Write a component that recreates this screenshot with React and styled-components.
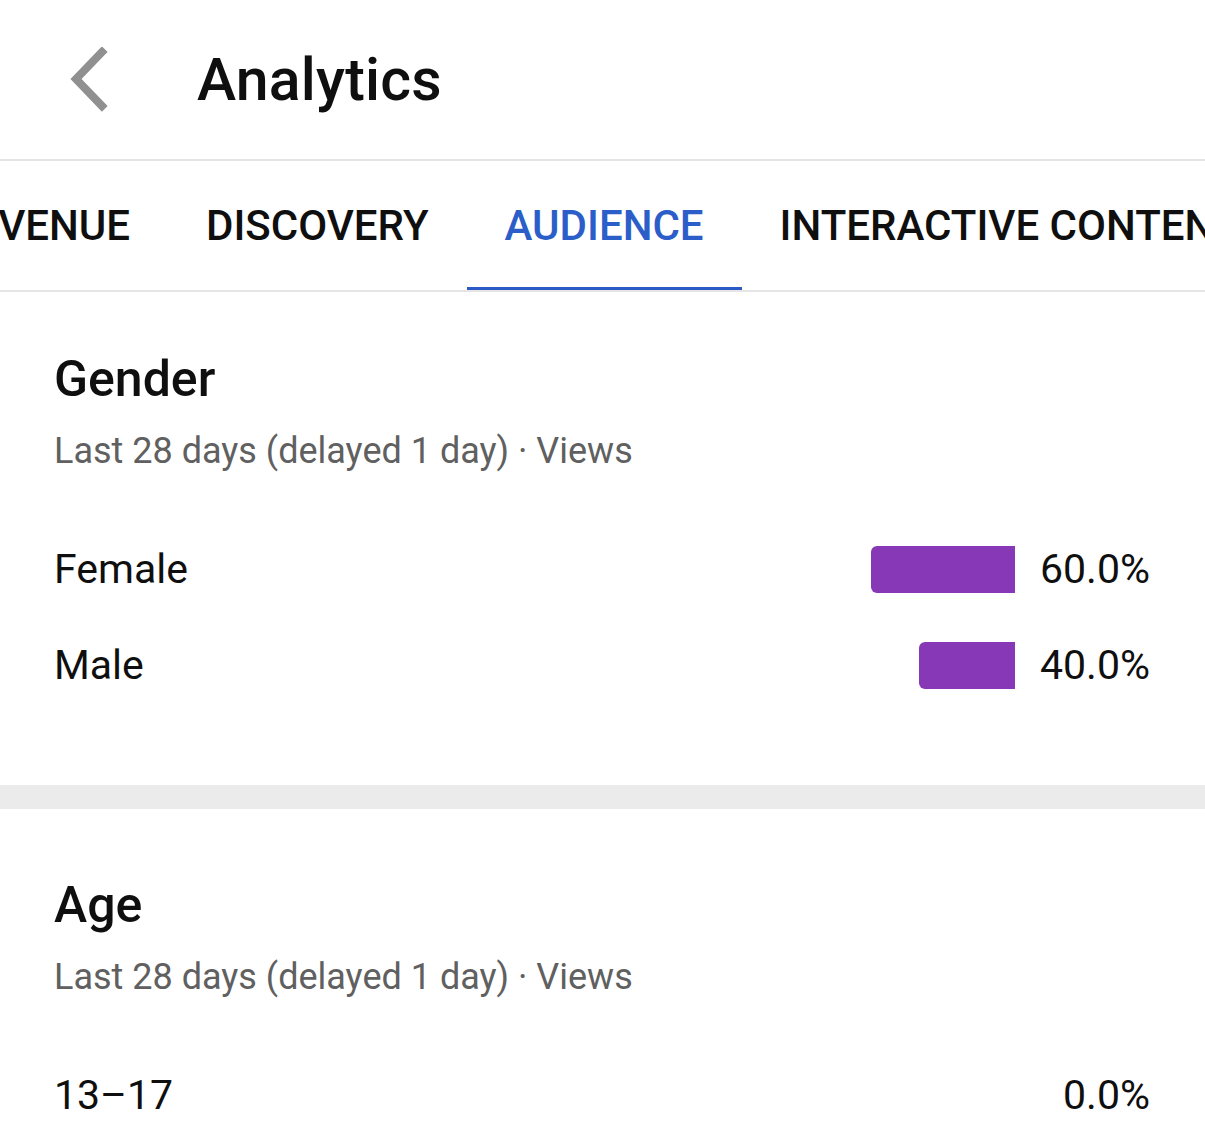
import React from 'react'
import styled, { createGlobalStyle, css } from 'styled-components'

const GlobalStyle = createGlobalStyle`
    html, body {
        margin: 0;
        padding: 0;
        background: #ffffff;
        overflow: hidden;
    }
    body {
        font-family: Roboto, "Liberation Sans", Arial, sans-serif;
        color: #0f0f0f;
    }
`

const Page = styled.div`
    width: 1205px;
    height: 1125px;
    overflow: hidden;
    background: #ffffff;
`

const Header = styled.header`
    display: flex;
    align-items: center;
    height: 159px;
    border-bottom: 2px solid #e5e5e5;
`
const BackButton = styled.button`
    display: flex;
    align-items: center;
    justify-content: center;
    width: 66px;
    height: 66px;
    margin-left: 55px;
    padding: 0;
    border: 0;
    background: transparent;
    cursor: pointer;
`
const Title = styled.h1`
    margin: 0 0 0 76px;
    font-size: 59px;
    font-weight: 500;
    letter-spacing: 0.2px;
    color: #0f0f0f;
`

const TabStrip = styled.nav`
    height: 129px;
    border-bottom: 2px solid #e5e5e5;
    overflow: hidden;
`
const TabTrack = styled.div`
    display: flex;
    height: 100%;
    margin-left: ${p => p.$offset}px;
    white-space: nowrap;
`
const Tab = styled.div`
    position: relative;
    display: flex;
    align-items: center;
    padding: 0 38px;
    font-size: 42px;
    font-weight: 500;
    color: #0f0f0f;
    ${p => p.$active && css`
        color: #2b5ec9;
        &::after {
            content: '';
            position: absolute;
            left: 0;
            right: 0;
            bottom: -2px;
            height: 5px;
            background: #2b5ac6;
        }
    `}
`

const Section = styled.section`
    padding: ${p => p.$top}px 55px 72px 54px;
`
const SectionTitle = styled.h2`
    margin: 0;
    font-size: 50px;
    line-height: 60px;
    font-weight: 500;
    color: #0f0f0f;
`
const Subtitle = styled.div`
    margin-top: 20px;
    font-size: 36px;
    line-height: 44px;
    color: #606060;
`
const Rows = styled.div`
    margin-top: 48px;
`
const Row = styled.div`
    display: flex;
    align-items: center;
    height: 96px;
`
const Label = styled.span`
    flex: 1;
    font-size: 41px;
    color: #0f0f0f;
`
const BarTrack = styled.div`
    display: flex;
    justify-content: flex-end;
    width: 240px;
`
const Bar = styled.div`
    height: 47px;
    background: #8638b6;
    border-radius: 6px 0 0 6px;
`
const Value = styled.span`
    width: 135px;
    text-align: right;
    font-size: 41px;
    color: #0f0f0f;
`

const Band = styled.div`
    height: 24px;
    background: #ebebeb;
`

const ChevronLeft = () => (
    <svg width="44" height="66" viewBox="0 0 44 66">
        <path d="M36 5 L10 32 L36 59" fill="none" stroke="#909090" strokeWidth="8" strokeLinecap="square" />
    </svg>
)

const tabs = ['REVENUE', 'DISCOVERY', 'AUDIENCE', 'INTERACTIVE CONTENT']

const gender = [
    { label: 'Female', value: 60.0 },
    { label: 'Male', value: 40.0 },
]

const age = [
    { label: '13–17', value: 0.0 },
]

const Breakdown = ({ title, top, data }) => (
    <Section $top={top}>
        <SectionTitle>{title}</SectionTitle>
        <Subtitle>Last 28 days (delayed 1 day) · Views</Subtitle>
        <Rows>
            {data.map(d => (
                <Row key={d.label}>
                    <Label>{d.label}</Label>
                    <BarTrack>
                        {d.value > 0 && <Bar style={{ width: d.value * 2.4 }} />}
                    </BarTrack>
                    <Value>{d.value.toFixed(1)}%</Value>
                </Row>
            ))}
        </Rows>
    </Section>
)

const App = () => {
    return (
        <Page>
            <GlobalStyle />
            <Header>
                <BackButton aria-label="Back"><ChevronLeft /></BackButton>
                <Title>Analytics</Title>
            </Header>
            <TabStrip>
                <TabTrack $offset={-90}>
                    {tabs.map(t => (
                        <Tab key={t} $active={t === 'AUDIENCE'}>{t}</Tab>
                    ))}
                </TabTrack>
            </TabStrip>
            <Breakdown title="Gender" top={57} data={gender} />
            <Band />
            <Breakdown title="Age" top={66} data={age} />
        </Page>
    )
}

export default App
